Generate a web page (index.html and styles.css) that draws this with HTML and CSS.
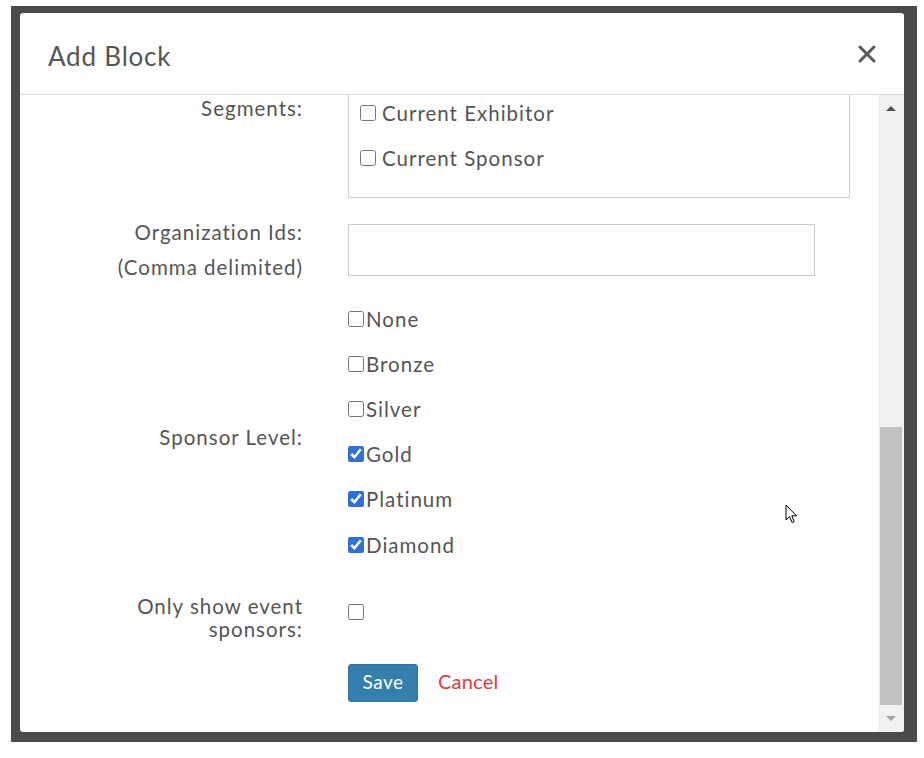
FILE: index.html
```html
<!DOCTYPE html>
<html lang="en">
<head>
<meta charset="utf-8">
<title>Add Block</title>
<link rel="stylesheet" href="styles.css">
</head>
<body>
<div class="backdrop">
  <div class="modal">
    <div class="modal-header">
      <h1 class="modal-title">Add Block</h1>
      <button class="close" type="button" aria-label="Close">
        <svg width="18" height="18" viewBox="0 0 18 18"><path d="M2 2 L16 16 M16 2 L2 16" stroke="#595959" stroke-width="3" stroke-linecap="round"/></svg>
      </button>
    </div>
    <div class="modal-body">
      <div class="content">
        <div class="row row-segments">
          <div class="label">Segments:</div>
          <div class="seg-box">
            <label class="seg-item"><input type="checkbox"> Current Exhibitor</label>
            <label class="seg-item"><input type="checkbox"> Current Sponsor</label>
          </div>
        </div>
        <div class="row row-org">
          <div class="label label-org">Organization Ids:<br>(Comma delimited)</div>
          <div><input class="text-input" type="text"></div>
        </div>
        <div class="row row-sponsor">
          <div class="label label-sponsor">Sponsor Level:</div>
          <div class="level-list">
            <label class="level-item"><input type="checkbox">None</label>
            <label class="level-item"><input type="checkbox">Bronze</label>
            <label class="level-item"><input type="checkbox">Silver</label>
            <label class="level-item"><input type="checkbox" checked>Gold</label>
            <label class="level-item"><input type="checkbox" checked>Platinum</label>
            <label class="level-item"><input type="checkbox" checked>Diamond</label>
          </div>
        </div>
        <div class="row row-only">
          <div class="label label-only">Only show event<br>sponsors:</div>
          <div><input class="only-check" type="checkbox"></div>
        </div>
        <div class="row row-actions">
          <div></div>
          <div class="actions">
            <button class="btn-save" type="button">Save</button>
            <a class="btn-cancel" href="#">Cancel</a>
          </div>
        </div>
      </div>
      <div class="scrollbar">
        <div class="sb-arrow sb-up"></div>
        <div class="sb-track"><div class="sb-thumb"></div></div>
        <div class="sb-arrow sb-down"></div>
      </div>
    </div>
  </div>
</div>
<svg class="cursor" width="13" height="21" viewBox="0 0 13 21"><path d="M1 1 L1 16 L4.5 12.5 L7 18.5 L9.2 17.6 L6.8 11.8 L11.5 11.8 Z" fill="#fff" stroke="#000" stroke-width="1"/></svg>
</body>
</html>
```

FILE: styles.css
```css
* { box-sizing: border-box; }
html, body { margin: 0; padding: 0; background: #ffffff; }
body {
  font-family: Lato, "Open Sans", sans-serif;
  color: #555;
  width: 924px;
  height: 758px;
  overflow: hidden;
  position: relative;
}
.backdrop {
  margin: 6px 0 0 11px;
  width: 906px;
  height: 736px;
  background: #4a4a4a;
  padding: 7px 13px 10px 9px;
}
.modal {
  background: #fff;
  height: 719px;
  border-radius: 3px;
  display: flex;
  flex-direction: column;
  overflow: hidden;
}
.modal-header {
  height: 82px;
  flex: none;
  border-bottom: 1px solid #d9d9d9;
  display: flex;
  align-items: center;
  justify-content: space-between;
  padding: 0 28px 0 28px;
}
.modal-title {
  margin: 0;
  font-weight: 400;
  font-size: 26px;
  color: #555;
  letter-spacing: 0.8px;
  position: relative;
  top: 2px;
}
.close {
  border: 0;
  background: none;
  padding: 0;
  width: 18px;
  height: 18px;
  display: flex;
  margin-top: 0;
}
.modal-body {
  flex: 1;
  display: flex;
  min-height: 0;
}
.content {
  flex: 1;
  display: flex;
  flex-direction: column;
}
.row {
  display: grid;
  grid-template-columns: 283px 1fr;
  column-gap: 45px;
}
.label {
  text-align: right;
  font-size: 20.5px;
  letter-spacing: 1px;
  color: #555;
}
.row-segments .label { line-height: 26px; }
.seg-box {
  width: 502px;
  border: 1px solid #ccc;
  border-top: none;
  padding: 0 0 21px 11px;
  display: flex;
  flex-direction: column;
  gap: 9px;
}
.seg-item {
  line-height: 36px;
  height: 36px;
  font-size: 20.5px;
  letter-spacing: 1px;
  color: #555;
  display: flex;
  align-items: center;
  gap: 6px;
}
input[type=checkbox] {
  width: 16px;
  height: 16px;
  margin: 0;
  accent-color: #2f6fe0;
  flex: none;
}
.row-org { margin-top: 26px; }
.label-org {
  line-height: 35px;
  margin-top: -9px;
}
.text-input {
  width: 467px;
  height: 52px;
  border: 1px solid #ccc;
  margin: 0;
  display: block;
}
.row-sponsor { margin-top: 11px; }
.label-sponsor {
  align-self: center;
  padding-top: 10px;
}
.level-list {
  display: flex;
  flex-direction: column;
}
.level-item {
  height: 45.2px;
  display: flex;
  align-items: center;
  font-size: 20.5px;
  letter-spacing: 1px;
  color: #555;
  gap: 2px;
}
.row-only { margin-top: 28px; }
.label-only { line-height: 23px; }
.only-check { margin-top: 9px !important; display: block; }
.row-actions { margin-top: 23px; }
.actions {
  display: flex;
  align-items: center;
  gap: 20px;
}
.btn-save {
  width: 70px;
  height: 38px;
  background: #347fae;
  color: #fff;
  border: 1px solid #2e76a3;
  border-radius: 3px;
  font-family: Lato, sans-serif;
  font-size: 19px;
  letter-spacing: 0.5px;
  padding: 0 0 4px 0;
}
.btn-cancel {
  color: #e8373c;
  font-size: 20px;
  text-decoration: none;
  letter-spacing: 0.2px;
  position: relative;
  top: -2px;
}
.scrollbar {
  width: 26px;
  flex: none;
  background: #f1f1f1;
  display: flex;
  flex-direction: column;
  align-items: center;
}
.sb-arrow {
  height: 27px;
  width: 26px;
  display: flex;
  align-items: center;
  justify-content: center;
  flex: none;
}
.sb-up::before {
  content: "";
  border-left: 5px solid transparent;
  border-right: 5px solid transparent;
  border-bottom: 5px solid #505050;
}
.sb-down::before {
  content: "";
  border-left: 5px solid transparent;
  border-right: 5px solid transparent;
  border-top: 5px solid #a3a3a3;
}
.sb-track {
  flex: 1;
  width: 100%;
  padding: 305px 2px 0 2px;
}
.sb-thumb {
  height: 278px;
  background: #c1c1c1;
}
.cursor {
  position: absolute;
  left: 785px;
  top: 504px;
}
```
